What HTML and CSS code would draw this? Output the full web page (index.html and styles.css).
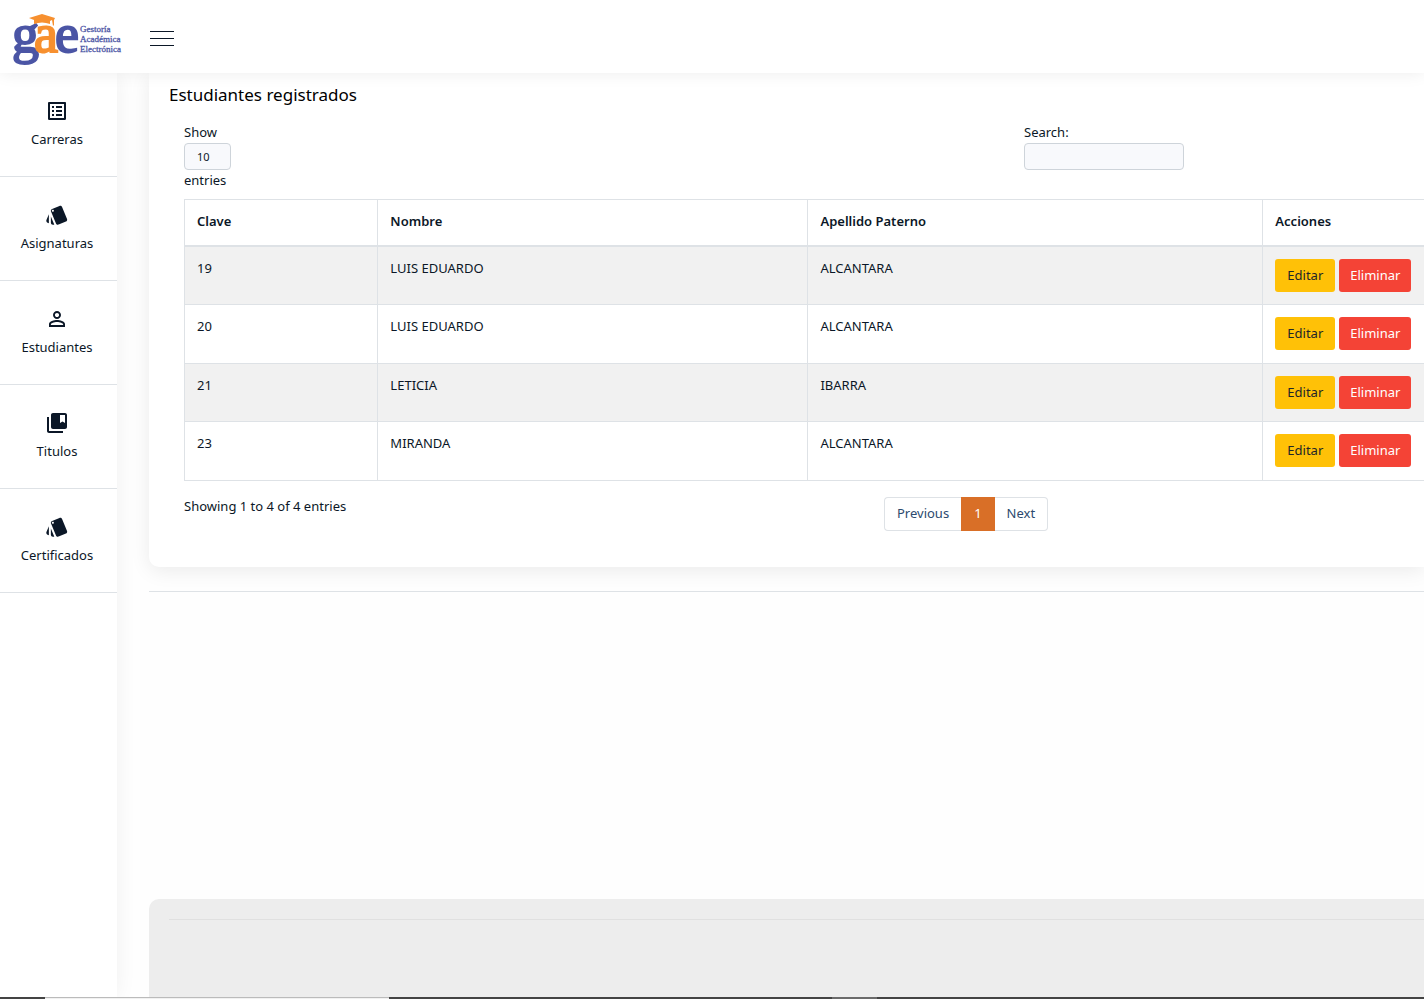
FILE: index.html
```html
<!DOCTYPE html>
<html lang="es">

<head>
    <meta charset="UTF-8">
    <meta name="viewport" content="width=device-width, initial-scale=1.0">
    <title>Estudiantes</title>
    <link rel="stylesheet" href="styles.css">
</head>

<body>
    <header class="topbar">
        <a class="logo" href="#" aria-label="Inicio">
            <svg width="112" height="60" viewBox="0 0 112 60">
                <text class="logo-big" x="0 22 43" y="43"><tspan class="blue">g</tspan><tspan class="orange">a</tspan><tspan class="blue">e</tspan></text>
                <path fill="#f7902f" d="M17 9 30 5 43 9 42 11V16L41 17 40 11 38 12V15Q30 12 22 15V11Z" />
                <g class="logo-small">
                    <text x="68" y="23">Gestoría</text>
                    <text x="68" y="33">Académica</text>
                    <text x="68" y="43">Electrónica</text>
                </g>
            </svg>
        </a>
        <button class="menu-btn" type="button" aria-label="Menú">
            <span></span>
            <span></span>
            <span></span>
        </button>
    </header>

    <div class="wrapper">
        <nav class="sidebar">
            <ul>
                <li>
                    <a href="#">
                        <svg viewBox="0 0 24 24"><path d="M19 5v14H5V5h14m1.100-2H3.900c-.5 0-.9.400-.9.900v16.200c0 .4.400.9.900.9h16.200c.4 0 .9-.5.900-.9V3.900c0-.5-.5-.9-.9-.9zM11 7h6v2h-6V7zm0 4h6v2h-6v-2zm0 4h6v2h-6zM7 7h2v2H7zm0 4h2v2H7zm0 4h2v2H7z" /></svg>
                        <span>Carreras</span>
                    </a>
                </li>
                <li>
                    <a href="#">
                        <svg viewBox="0 0 24 24"><path d="M2.530 19.650l1.340.560v-9.030l-2.430 5.860c-.410 1.020.080 2.190 1.090 2.610zm19.500-3.700L17.070 3.980c-.310-.750-1.040-1.210-1.810-1.230-.260 0-.530.040-.790.150L7.100 5.950c-.750.310-1.210 1.030-1.230 1.800-.010.270.040.540.150.800l4.960 11.970c.310.760 1.050 1.220 1.830 1.230.260 0 .520-.050.770-.150l7.360-3.050c1.020-.420 1.510-1.590 1.090-2.600zM7.880 8.750c-.550 0-1-.450-1-1s.450-1 1-1 1 .450 1 1-.450 1-1 1zm-2 11c0 1.100.900 2 2 2h1.450l-3.450-8.340v6.340z" /></svg>
                        <span>Asignaturas</span>
                    </a>
                </li>
                <li>
                    <a href="#">
                        <svg viewBox="0 0 24 24"><path d="M12 5.900c1.160 0 2.100.940 2.100 2.100s-.940 2.100-2.100 2.100S9.900 9.160 9.900 8s.940-2.100 2.100-2.100m0 9c2.970 0 6.100 1.460 6.100 2.100v1.100H5.900V17c0-.640 3.130-2.100 6.100-2.100M12 4C9.790 4 8 5.790 8 8s1.790 4 4 4 4-1.790 4-4-1.790-4-4-4zm0 9c-2.670 0-8 1.340-8 4v3h16v-3c0-2.660-5.330-4-8-4z" /></svg>
                        <span>Estudiantes</span>
                    </a>
                </li>
                <li>
                    <a href="#">
                        <svg viewBox="0 0 24 24"><path d="M4 6H2v14c0 1.100.900 2 2 2h14v-2H4V6zm16-4H8c-1.100 0-2 .9-2 2v12c0 1.100.900 2 2 2h12c1.100 0 2-.9 2-2V4c0-1.100-.9-2-2-2zm0 10l-2.500-1.500L15 12V4h5v8z" /></svg>
                        <span>Titulos</span>
                    </a>
                </li>
                <li>
                    <a href="#">
                        <svg viewBox="0 0 24 24"><path d="M2.530 19.650l1.340.560v-9.030l-2.430 5.860c-.410 1.020.080 2.190 1.090 2.610zm19.500-3.700L17.070 3.980c-.310-.750-1.040-1.210-1.810-1.230-.260 0-.530.040-.790.150L7.100 5.950c-.750.310-1.210 1.030-1.230 1.800-.010.270.040.540.150.800l4.960 11.970c.310.760 1.050 1.220 1.830 1.230.260 0 .520-.050.770-.150l7.360-3.050c1.020-.420 1.510-1.590 1.090-2.600zM7.880 8.750c-.550 0-1-.450-1-1s.450-1 1-1 1 .450 1 1-.450 1-1 1zm-2 11c0 1.100.900 2 2 2h1.450l-3.450-8.340v6.340z" /></svg>
                        <span>Certificados</span>
                    </a>
                </li>
            </ul>
        </nav>

        <main class="content">
            <section class="card">
                <h1>Estudiantes registrados</h1>
                <div class="table-box">
                    <div class="filters">
                        <div class="field">
                            <label for="length">Show</label>
                            <select id="length">
                                <option>10</option>
                                <option>25</option>
                                <option>50</option>
                            </select>
                            <span>entries</span>
                        </div>
                        <div class="field">
                            <label for="search">Search:</label>
                            <input id="search" type="search">
                        </div>
                    </div>

                    <table>
                        <thead>
                            <tr>
                                <th class="col-clave">Clave</th>
                                <th class="col-nombre">Nombre</th>
                                <th class="col-apellido">Apellido Paterno</th>
                                <th>Acciones</th>
                            </tr>
                        </thead>
                        <tbody>
                            <tr>
                                <td>19</td>
                                <td>LUIS EDUARDO</td>
                                <td>ALCANTARA</td>
                                <td>
                                    <div class="actions">
                                        <button class="btn btn-edit" type="button">Editar</button>
                                        <button class="btn btn-delete" type="button">Eliminar</button>
                                    </div>
                                </td>
                            </tr>
                            <tr>
                                <td>20</td>
                                <td>LUIS EDUARDO</td>
                                <td>ALCANTARA</td>
                                <td>
                                    <div class="actions">
                                        <button class="btn btn-edit" type="button">Editar</button>
                                        <button class="btn btn-delete" type="button">Eliminar</button>
                                    </div>
                                </td>
                            </tr>
                            <tr>
                                <td>21</td>
                                <td>LETICIA</td>
                                <td>IBARRA</td>
                                <td>
                                    <div class="actions">
                                        <button class="btn btn-edit" type="button">Editar</button>
                                        <button class="btn btn-delete" type="button">Eliminar</button>
                                    </div>
                                </td>
                            </tr>
                            <tr>
                                <td>23</td>
                                <td>MIRANDA</td>
                                <td>ALCANTARA</td>
                                <td>
                                    <div class="actions">
                                        <button class="btn btn-edit" type="button">Editar</button>
                                        <button class="btn btn-delete" type="button">Eliminar</button>
                                    </div>
                                </td>
                            </tr>
                        </tbody>
                    </table>

                    <div class="table-foot">
                        <p>Showing 1 to 4 of 4 entries</p>
                        <div class="pagination">
                            <a class="prev" href="#">Previous</a>
                            <a class="active" href="#">1</a>
                            <a class="next" href="#">Next</a>
                        </div>
                    </div>
                </div>
            </section>
            <hr>
            <section class="panel">
                <hr>
            </section>
        </main>
    </div>

    <div class="taskbar">
        <span class="task-open"></span>
        <span class="task-item"></span>
    </div>
</body>

</html>
```
FILE: styles.css
```css
* {
    padding: 0;
    margin: 0;
    box-sizing: border-box;
}

body {
    display: flex;
    flex-direction: column;
    height: 100vh;
    overflow: hidden;
    font-family: "Noto Sans", sans-serif;
    font-size: 13px;
    line-height: 19px;
    color: #0b1727;
    background-color: #fefefe;
}

ul {
    list-style: none;
}

a {
    color: inherit;
    text-decoration: none;
}

hr {
    border: 0;
    border-top: 1px solid #dee2e6;
}

/* header */
.topbar {
    z-index: 2;
    display: flex;
    flex: none;
    align-items: center;
    gap: 26px;
    height: 73px;
    padding: 4px 12px 0;
    background-color: #fff;
    box-shadow: 0 0 16px rgba(0, 0, 0, .08);
}

.logo {
    height: 60px;
}

.logo svg {
    display: block;
    overflow: visible;
}

.logo-big {
    font-family: "Liberation Serif", serif;
    font-size: 54px;
    stroke-width: 2px;
}

.logo-small {
    font-family: "Liberation Serif", serif;
    font-size: 9px;
    fill: #4b55a5;
    stroke: #4b55a5;
    stroke-width: .3;
}

.blue {
    fill: #4b55a5;
    stroke: #4b55a5;
}

.orange {
    fill: #f7902f;
    stroke: #f7902f;
}

.menu-btn {
    display: flex;
    flex-direction: column;
    gap: 6px;
    width: 24px;
    border: 0;
    background: none;
}

.menu-btn span {
    height: 1px;
    background-color: #0b1727;
}

.wrapper {
    display: flex;
    flex: 1;
    min-height: 0;
}

/* sidebar */
.sidebar {
    z-index: 1;
    flex: none;
    width: 117px;
    background-color: #fff;
    box-shadow: 0 0 20px rgba(0, 0, 0, .06);
}

.sidebar a {
    display: flex;
    flex-direction: column;
    align-items: center;
    gap: 7px;
    height: 104px;
    padding: 26px 3px 0 0;
    border-bottom: 1px solid #dee2e6;
}

.sidebar svg {
    width: 24px;
    height: 24px;
    fill: #0b1727;
}

/* content */
.content {
    display: flex;
    flex: 1;
    flex-direction: column;
    min-width: 0;
    padding-left: 32px;
}

.card {
    flex: none;
    padding: 10px 0 36px 20px;
    margin-bottom: 24px;
    border-radius: 0 0 0 10px;
    background-color: #fff;
    box-shadow: 0 4px 20px rgba(0, 0, 0, .08);
}

h1 {
    font-size: 17px;
    font-weight: normal;
    line-height: 24px;
    color: #000;
}

.table-box {
    padding: 16px 0 0 15px;
}

.filters {
    display: grid;
    grid-template-columns: 21fr 10fr;
    margin-bottom: 9px;
}

.field {
    display: flex;
    flex-direction: column;
    align-items: flex-start;
    gap: 1px;
}

.field select,
.field input {
    height: 27px;
    border: 1px solid #ced4da;
    border-radius: 4px;
    background-color: #f8f9fc;
    font: inherit;
    font-size: 11px;
    color: #0b1727;
}

.field select {
    width: 47px;
    padding: 0 12px;
    appearance: none;
}

.field input {
    width: 160px;
    padding: 0 8px;
}

table {
    width: 100%;
    table-layout: fixed;
    border-collapse: collapse;
    border-left: 1px solid #dee2e6;
}

.col-clave {
    width: 15.6%;
}

.col-nombre {
    width: 34.7%;
}

.col-apellido {
    width: 36.7%;
}

th,
td {
    padding: 12px;
    border: 1px solid #dee2e6;
    border-right: 0;
    text-align: left;
    vertical-align: top;
}

th {
    height: 46px;
    border-bottom-width: 2px;
    font-weight: 600;
}

tbody tr {
    height: 58px;
}

tbody tr:nth-child(even) {
    height: 59px;
}

tbody tr:nth-child(odd) {
    background-color: #f1f1f1;
}

.actions {
    display: flex;
    gap: 4px;
}

.btn {
    height: 33px;
    padding: 0 12px;
    border: 0;
    border-radius: 3px;
    font: inherit;
}

.btn-edit {
    color: #212529;
    background-color: #ffc107;
}

.btn-delete {
    padding: 0 11px;
    color: #fff;
    background-color: #f44336;
}

.table-foot {
    display: grid;
    grid-template-columns: 35fr 27fr;
    margin-top: 16px;
}

.pagination {
    display: flex;
    color: #2c4a6e;
}

.pagination a {
    height: 34px;
    padding: 6px 12px;
    border: 1px solid #dee2e6;
}

.pagination .prev {
    border-right: 0;
    border-radius: 4px 0 0 4px;
}

.pagination .next {
    border-left: 0;
    border-radius: 0 4px 4px 0;
}

.pagination .active {
    border-color: #d96f27;
    color: #fff;
    background-color: #d96f27;
}

.panel {
    flex: none;
    height: 98px;
    padding: 20px 0 0 20px;
    margin-top: auto;
    border-radius: 10px 0 0 0;
    background-color: #ededed;
}

.panel hr {
    border-color: #e0e0e0;
}

/* bottom strip */
.taskbar {
    z-index: 2;
    display: grid;
    flex: none;
    grid-template-columns: 45fr 344fr 443fr 45fr 547fr;
    height: 2px;
    background-color: #444;
}

.task-open {
    grid-column: 2;
    border-top: 1px solid #bbb;
    background-color: #f1f1f1;
}

.task-item {
    grid-column: 4;
    background-color: #6b6b6b;
}
```
